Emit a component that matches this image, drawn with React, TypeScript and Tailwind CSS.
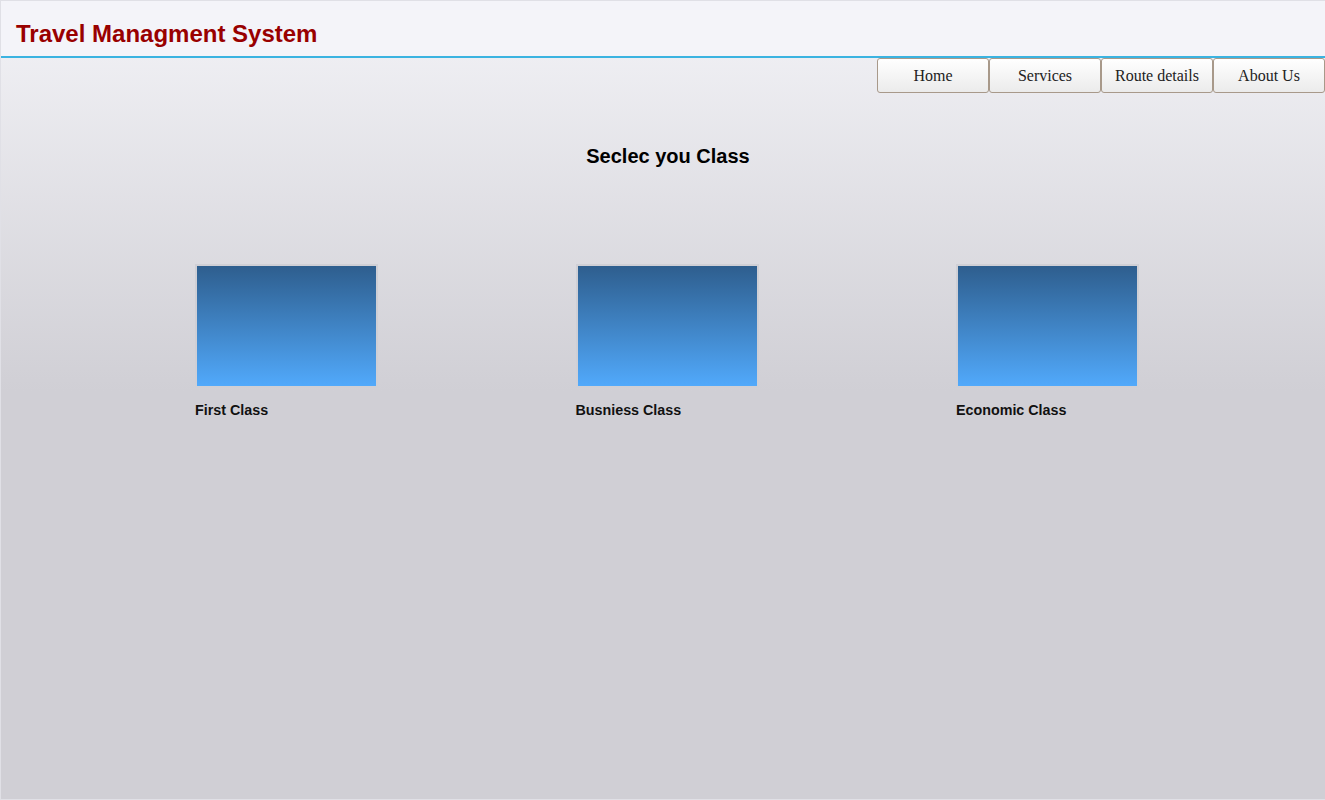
const navItems = ['Home', 'Services', 'Route details', 'About Us'];

const classes = ['First Class', 'Busniess Class', 'Economic Class'];

export default function App() {
  return (
    <div className="min-h-screen border border-r-0 border-[#e0e0e6] bg-[linear-gradient(to_bottom,#f3f3f7_0px,#d0cfd5_390px,#d0cfd5_100%)] font-['Liberation_Sans',Arial,sans-serif]">
      {/* header */}
      <div className="bg-[#f4f4f9] border-b-2 border-[#3bb3e1] pt-[19px] pb-[8px] pl-[15px]">
        <h1 className="text-[24px] leading-[28px] font-bold text-[#990000]">
          Travel Managment System
        </h1>
      </div>

      {/* nav */}
      <div className="flex justify-end">
        {navItems.map((item) => (
          <button
            key={item}
            className="w-[112px] h-[35px] border border-[#a8998a] rounded-[3px] bg-[linear-gradient(to_bottom,#ffffff,#ebebeb)] text-[16px] text-[#222] font-['Liberation_Serif','Times_New_Roman',serif]"
          >
            {item}
          </button>
        ))}
      </div>

      <h2 className="mt-[51px] pl-[10px] text-center text-[20px] leading-[24px] font-bold text-black">
        Seclec you Class
      </h2>

      <div className="mt-[96px] flex pl-[194px]">
        {classes.map((c) => (
          <div key={c} className="w-[380.5px] shrink-0">
            <div className="w-[183px] h-[124px] border-2 border-[#cfcfd5] bg-[linear-gradient(to_bottom,#2e5e8e,#51a9fb)]" />
            <p className="mt-[14px] text-[14.3px] leading-[17px] font-bold text-[#111]">{c}</p>
          </div>
        ))}
      </div>
    </div>
  );
}
